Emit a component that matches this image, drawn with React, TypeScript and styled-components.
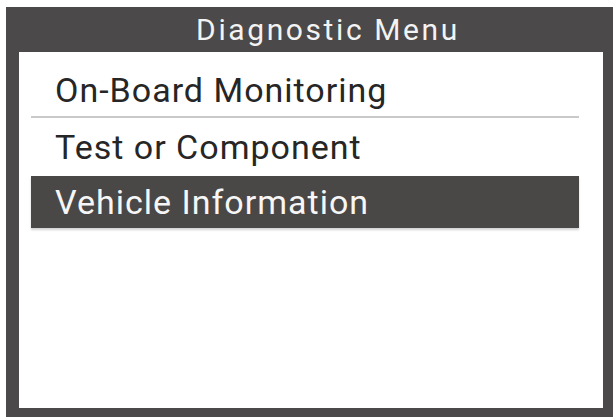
import styled, { createGlobalStyle } from "styled-components";

const GlobalStyle = createGlobalStyle`
  html, body {
    margin: 0;
    padding: 0;
    background: #ffffff;
  }
  body {
    font-family: Roboto, "Liberation Sans", sans-serif;
  }
`;

// ---------------- 화면 틀 ----------------
const Screen = styled.div`
  width: 615px;
  height: 420px;
  padding: 7px 2px 3px 6px;
  box-sizing: border-box;
`;

const Frame = styled.div`
  width: 607px;
  height: 410px;
  box-sizing: border-box;
  background: #4b4949;
  border-left: 13px solid #4b4949;
  border-right: 10px solid #4b4949;
  border-bottom: 9px solid #4b4949;
  display: flex;
  flex-direction: column;
`;

const Title = styled.div`
  height: 45px;
  flex: none;
  display: flex;
  align-items: center;
  justify-content: center;
  padding-left: 34px;
  color: #f3f3f3;
  font-size: 30px;
  letter-spacing: 2.6px;
`;

const Body = styled.div`
  flex: 1;
  background: #ffffff;
  padding: 12px 24px 0 12px;
  display: flex;
  flex-direction: column;
  gap: 3px;
`;

const Item = styled.div<{ $selected?: boolean; $divider?: boolean }>`
  height: 52px;
  line-height: 52px;
  padding-left: 24px;
  font-size: 34px;
  letter-spacing: 1px;
  color: ${(p) => (p.$selected ? "#f6f6f6" : "#262626")};
  background: ${(p) => (p.$selected ? "#4a4747" : "transparent")};
  border-bottom: ${(p) => (p.$divider ? "2px solid #c9c9c9" : "none")};
  box-shadow: ${(p) => (p.$selected ? "0 2px 2px rgba(0, 0, 0, 0.18)" : "none")};
  white-space: nowrap;
`;

const menu = [
  { label: "On-Board Monitoring", divider: true },
  { label: "Test or Component" },
  { label: "Vehicle Information", selected: true },
];

const App = () => {
  return (
    <>
      <GlobalStyle />
      <Screen>
        <Frame>
          <Title>Diagnostic Menu</Title>
          <Body>
            {menu.map((m) => (
              <Item key={m.label} $selected={m.selected} $divider={m.divider}>
                {m.label}
              </Item>
            ))}
          </Body>
        </Frame>
      </Screen>
    </>
  );
};

export default App;
